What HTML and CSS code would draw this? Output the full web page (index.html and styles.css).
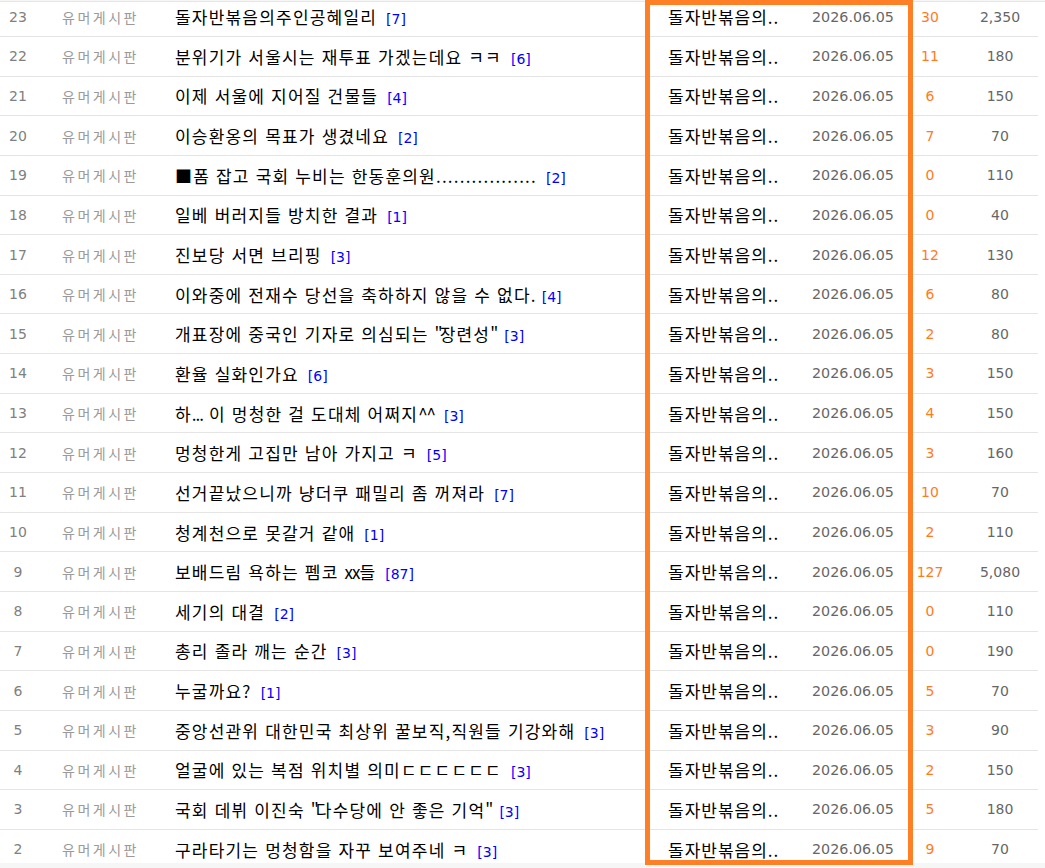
FILE: index.html
```html
<!DOCTYPE html>
<html lang="ko">
<head>
<meta charset="utf-8">
<title>게시판</title>
<link rel="stylesheet" href="styles.css">
</head>
<body>
<div class="board">
  <div class="list">
    <div class="row"><span class="c-num">23</span><span class="c-cat">유머게시판</span><span class="c-title"><span class="t">돌자반볶음의주인공혜일리</span><span class="cmt">[7]</span></span><span class="c-author">돌자반볶음의..</span><span class="c-date">2026.06.05</span><span class="c-reply">30</span><span class="c-views">2,350</span></div>
    <div class="row"><span class="c-num">22</span><span class="c-cat">유머게시판</span><span class="c-title"><span class="t">분위기가 서울시는 재투표 가겠는데요 ㅋㅋ</span><span class="cmt">[6]</span></span><span class="c-author">돌자반볶음의..</span><span class="c-date">2026.06.05</span><span class="c-reply">11</span><span class="c-views">180</span></div>
    <div class="row"><span class="c-num">21</span><span class="c-cat">유머게시판</span><span class="c-title"><span class="t">이제 서울에 지어질 건물들</span><span class="cmt">[4]</span></span><span class="c-author">돌자반볶음의..</span><span class="c-date">2026.06.05</span><span class="c-reply">6</span><span class="c-views">150</span></div>
    <div class="row"><span class="c-num">20</span><span class="c-cat">유머게시판</span><span class="c-title"><span class="t">이승환옹의 목표가 생겼네요</span><span class="cmt">[2]</span></span><span class="c-author">돌자반볶음의..</span><span class="c-date">2026.06.05</span><span class="c-reply">7</span><span class="c-views">70</span></div>
    <div class="row"><span class="c-num">19</span><span class="c-cat">유머게시판</span><span class="c-title"><span class="t">■폼 잡고 국회 누비는 한동훈의원.................</span><span class="cmt">[2]</span></span><span class="c-author">돌자반볶음의..</span><span class="c-date">2026.06.05</span><span class="c-reply">0</span><span class="c-views">110</span></div>
    <div class="row"><span class="c-num">18</span><span class="c-cat">유머게시판</span><span class="c-title"><span class="t">일베 버러지들 방치한 결과</span><span class="cmt">[1]</span></span><span class="c-author">돌자반볶음의..</span><span class="c-date">2026.06.05</span><span class="c-reply">0</span><span class="c-views">40</span></div>
    <div class="row"><span class="c-num">17</span><span class="c-cat">유머게시판</span><span class="c-title"><span class="t">진보당 서면 브리핑</span><span class="cmt">[3]</span></span><span class="c-author">돌자반볶음의..</span><span class="c-date">2026.06.05</span><span class="c-reply">12</span><span class="c-views">130</span></div>
    <div class="row"><span class="c-num">16</span><span class="c-cat">유머게시판</span><span class="c-title"><span class="t">이와중에 전재수 당선을 축하하지 않을 수 없다<span class="pn">.</span></span><span class="cmt">[4]</span></span><span class="c-author">돌자반볶음의..</span><span class="c-date">2026.06.05</span><span class="c-reply">6</span><span class="c-views">80</span></div>
    <div class="row"><span class="c-num">15</span><span class="c-cat">유머게시판</span><span class="c-title"><span class="t">개표장에 중국인 기자로 의심되는 <span class="pq">"</span>장련성<span class="pq">"</span></span><span class="cmt">[3]</span></span><span class="c-author">돌자반볶음의..</span><span class="c-date">2026.06.05</span><span class="c-reply">2</span><span class="c-views">80</span></div>
    <div class="row"><span class="c-num">14</span><span class="c-cat">유머게시판</span><span class="c-title"><span class="t">환율 실화인가요</span><span class="cmt">[6]</span></span><span class="c-author">돌자반볶음의..</span><span class="c-date">2026.06.05</span><span class="c-reply">3</span><span class="c-views">150</span></div>
    <div class="row"><span class="c-num">13</span><span class="c-cat">유머게시판</span><span class="c-title"><span class="t">하<span class="pd">...</span> 이 멍청한 걸 도대체 어쩌지<span class="pd">^^</span></span><span class="cmt">[3]</span></span><span class="c-author">돌자반볶음의..</span><span class="c-date">2026.06.05</span><span class="c-reply">4</span><span class="c-views">150</span></div>
    <div class="row"><span class="c-num">12</span><span class="c-cat">유머게시판</span><span class="c-title"><span class="t">멍청한게 고집만 남아 가지고 ㅋ</span><span class="cmt">[5]</span></span><span class="c-author">돌자반볶음의..</span><span class="c-date">2026.06.05</span><span class="c-reply">3</span><span class="c-views">160</span></div>
    <div class="row"><span class="c-num">11</span><span class="c-cat">유머게시판</span><span class="c-title"><span class="t">선거끝났으니까 냥더쿠 패밀리 좀 꺼져라</span><span class="cmt">[7]</span></span><span class="c-author">돌자반볶음의..</span><span class="c-date">2026.06.05</span><span class="c-reply">10</span><span class="c-views">70</span></div>
    <div class="row"><span class="c-num">10</span><span class="c-cat">유머게시판</span><span class="c-title"><span class="t">청계천으로 못갈거 같애</span><span class="cmt">[1]</span></span><span class="c-author">돌자반볶음의..</span><span class="c-date">2026.06.05</span><span class="c-reply">2</span><span class="c-views">110</span></div>
    <div class="row"><span class="c-num">9</span><span class="c-cat">유머게시판</span><span class="c-title"><span class="t">보배드림 욕하는 펨코 <span class="pd">xx</span>들</span><span class="cmt">[87]</span></span><span class="c-author">돌자반볶음의..</span><span class="c-date">2026.06.05</span><span class="c-reply">127</span><span class="c-views">5,080</span></div>
    <div class="row"><span class="c-num">8</span><span class="c-cat">유머게시판</span><span class="c-title"><span class="t">세기의 대결</span><span class="cmt">[2]</span></span><span class="c-author">돌자반볶음의..</span><span class="c-date">2026.06.05</span><span class="c-reply">0</span><span class="c-views">110</span></div>
    <div class="row"><span class="c-num">7</span><span class="c-cat">유머게시판</span><span class="c-title"><span class="t">총리 졸라 깨는 순간</span><span class="cmt">[3]</span></span><span class="c-author">돌자반볶음의..</span><span class="c-date">2026.06.05</span><span class="c-reply">0</span><span class="c-views">190</span></div>
    <div class="row"><span class="c-num">6</span><span class="c-cat">유머게시판</span><span class="c-title"><span class="t">누굴까요?</span><span class="cmt">[1]</span></span><span class="c-author">돌자반볶음의..</span><span class="c-date">2026.06.05</span><span class="c-reply">5</span><span class="c-views">70</span></div>
    <div class="row"><span class="c-num">5</span><span class="c-cat">유머게시판</span><span class="c-title"><span class="t">중앙선관위 대한민국 최상위 꿀보직,직원들 기강와해</span><span class="cmt">[3]</span></span><span class="c-author">돌자반볶음의..</span><span class="c-date">2026.06.05</span><span class="c-reply">3</span><span class="c-views">90</span></div>
    <div class="row"><span class="c-num">4</span><span class="c-cat">유머게시판</span><span class="c-title"><span class="t">얼굴에 있는 복점 위치별 의미ㄷㄷㄷㄷㄷㄷ</span><span class="cmt">[3]</span></span><span class="c-author">돌자반볶음의..</span><span class="c-date">2026.06.05</span><span class="c-reply">2</span><span class="c-views">150</span></div>
    <div class="row"><span class="c-num">3</span><span class="c-cat">유머게시판</span><span class="c-title"><span class="t">국회 데뷔 이진숙 <span class="pq">"</span>다수당에 안 좋은 기억<span class="pq">"</span></span><span class="cmt">[3]</span></span><span class="c-author">돌자반볶음의..</span><span class="c-date">2026.06.05</span><span class="c-reply">5</span><span class="c-views">180</span></div>
    <div class="row"><span class="c-num">2</span><span class="c-cat">유머게시판</span><span class="c-title"><span class="t">구라타기는 멍청함을 자꾸 보여주네 ㅋ</span><span class="cmt">[3]</span></span><span class="c-author">돌자반볶음의..</span><span class="c-date">2026.06.05</span><span class="c-reply">9</span><span class="c-views">70</span></div>
  </div>
</div>
<div class="highlight"></div>
</body>
</html>
```

FILE: styles.css
```css
html, body {
  margin: 0;
  padding: 0;
}
body {
  position: relative;
  background: #f6f6f6;
  font-family: "Noto Sans CJK KR", "Noto Sans", sans-serif;
  height: 868px;
  overflow: hidden;
}
.board {
  margin-top: 1px;
  height: 861px;
  border-top: 1px solid #e6e6e6;
  background: #fff;
  overflow: hidden;
}
.list {
  width: 1038px;
  margin-top: -4.65px;
}
.row {
  display: flex;
  align-items: center;
  height: 39.65px;
  box-sizing: border-box;
  border-bottom: 1px solid #e5e5e5;
  white-space: nowrap;
}
.c-num {
  width: 36px;
  text-align: center;
  font-family: "DejaVu Sans", sans-serif;
  font-size: 14px;
  color: #808080;
}
.c-cat {
  width: 113px;
  padding-left: 26px;
  font-size: 14px;
  letter-spacing: 2.5px;
  color: #9a9a9a;
}
.c-title {
  width: 493px;
  font-size: 17px;
  color: #000;
  overflow: hidden;
}
.c-title .t {
  letter-spacing: 1.2px;
}
.c-title .pq {
  letter-spacing: -3px;
}
.c-title .pq:first-child {
  letter-spacing: -3px;
}
.c-title .pn {
  letter-spacing: -2.8px;
}
.c-title .pd {
  letter-spacing: -1px;
}
.cmt {
  margin-left: 9px;
  font-family: "DejaVu Sans", sans-serif;
  font-size: 14px;
  color: #0000ff;
}
.c-author {
  width: 144px;
  font-size: 17px;
  letter-spacing: 1px;
  color: #000;
}
.c-date {
  width: 96px;
  font-family: "DejaVu Sans", sans-serif;
  font-size: 14.3px;
  color: #666;
}
.c-reply {
  width: 44px;
  text-align: center;
  font-family: "DejaVu Sans", sans-serif;
  font-size: 14px;
  color: #ff7b1c;
}
.c-views {
  width: 76px;
  padding-left: 10px;
  text-align: center;
  font-family: "DejaVu Sans", sans-serif;
  font-size: 14px;
  color: #666;
}
.highlight {
  position: absolute;
  left: 645px;
  top: 0;
  width: 268px;
  height: 865px;
  box-sizing: border-box;
  border: 5px solid #ff7f27;
}
```
